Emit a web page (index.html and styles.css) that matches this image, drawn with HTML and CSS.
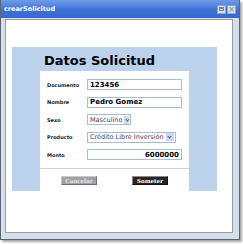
FILE: index.html
```html
<!DOCTYPE html>
<html lang="es">
<head>
    <meta charset="UTF-8">
    <title>crearSolicitud</title>
    <link rel="stylesheet" href="styles.css">
</head>
<body>
    <div class="window">
        <div class="titlebar">
            <span class="title">crearSolicitud</span>
            <div class="win-btns">
                <span class="win-btn"><i class="max"></i></span>
                <span class="win-btn close">&times;</span>
            </div>
        </div>
        <div class="frame">
            <div class="content">
                <div class="panel">
                    <h1>Datos Solicitud</h1>
                    <div class="card">
                        <form class="form">
                            <label>Documento</label>
                            <input type="text" class="field" value="123456">
                            <label>Nombre</label>
                            <input type="text" class="field" value="Pedro Gomez">
                            <label>Sexo</label>
                            <div class="select sexo"><span>Masculino</span><b></b></div>
                            <label>Producto</label>
                            <div class="select producto"><span>Crédito Libre Inversión</span><b></b></div>
                            <label>Monto</label>
                            <input type="text" class="field monto" value="6000000">
                        </form>
                        <div class="actions">
                            <button type="button" class="btn cancel">Cancelar</button>
                            <button type="button" class="btn submit">Someter</button>
                        </div>
                    </div>
                </div>
            </div>
        </div>
    </div>
</body>
</html>
```

FILE: styles.css
```css
* {
    margin: 0;
    padding: 0;
    box-sizing: border-box;
    font-family: "DejaVu Sans", Verdana, sans-serif;
}

body {
    background: #fff;
    width: 243px;
    height: 244px;
}

.window {
    width: 240px;
    height: 240px;
    border: 1px solid #5c6470;
    border-top: none;
    background: #d3e0ec;
    box-shadow: 2px 2px 2px rgba(0, 0, 0, 0.35);
    display: flex;
    flex-direction: column;
}

.titlebar {
    height: 18px;
    background: linear-gradient(180deg, #6f9be6, #3c6fd6 60%, #3a68cc);
    display: flex;
    align-items: center;
    justify-content: space-between;
    padding: 0 3px 0 3px;
}

.title {
    color: #fff;
    font-size: 6.5px;
    font-weight: bold;
}

.win-btns {
    display: flex;
    gap: 1px;
}

.win-btn {
    width: 9px;
    height: 9px;
    border: 1px solid #8ea6cc;
    background: #d8dde6;
    color: #7b8594;
    font-size: 8px;
    line-height: 7px;
    text-align: center;
    display: flex;
    align-items: center;
    justify-content: center;
}

.win-btn .max {
    width: 5px;
    height: 4px;
    border: 1px solid #7b8594;
    border-top-width: 2px;
}

.frame {
    flex: 1;
    padding: 1px 6px 5px 4px;
}

.content {
    height: 214px;
    background: #fff;
    border: 1px solid #9a9a9a;
    padding: 27px 0 0 6px;
}

.panel {
    width: 205px;
    height: 144px;
    background: #bcd2ec;
    padding: 3px 0 0 28px;
}

.panel h1 {
    font-size: 13px;
    line-height: 21px;
    color: #000;
    padding-left: 4px;
}

.card {
    width: 149px;
    height: 120px;
    background: #fff;
}

.form {
    display: grid;
    grid-template-columns: 40px 1fr;
    row-gap: 6.5px;
    align-items: center;
    padding: 8px 7px 0 7px;
}

.form label {
    font-size: 5px;
    font-weight: bold;
    color: #222;
}

.field {
    height: 11px;
    width: 95px;
    border: 1px solid #a9bdd4;
    font-size: 7px;
    font-weight: bold;
    color: #000;
    padding: 0 2px;
    outline: none;
}

.monto {
    text-align: right;
}

.select {
    height: 11px;
    border: 1px solid #a9bdd4;
    display: flex;
    align-items: center;
    font-size: 6.5px;
    color: #4b3a5a;
    padding-left: 2px;
    gap: 2px;
}

.sexo {
    width: 44px;
}

.producto {
    width: 89px;
}

.select span {
    flex: 1;
    white-space: nowrap;
}

.select b {
    width: 8px;
    height: 8px;
    margin-right: 1px;
    background: #c9d8ee;
    position: relative;
}

.select b::after {
    content: "";
    position: absolute;
    left: 2px;
    top: 2px;
    width: 2px;
    height: 2px;
    border-right: 1px solid #3d5fa0;
    border-bottom: 1px solid #3d5fa0;
    transform: rotate(45deg);
}

.actions {
    margin-top: 8px;
    border-top: 1px solid #d4d4d4;
    display: flex;
    padding: 7px 0 0 21px;
    gap: 35px;
}

.btn {
    width: 36px;
    height: 9px;
    border: 1px solid #777;
    font-size: 5.5px;
    font-weight: bold;
    font-family: "DejaVu Serif", serif;
    color: #fff;
    cursor: pointer;
}

.cancel {
    background: #a2a2a2;
    border-color: #c8c8c8 #6e6e6e #6e6e6e #c8c8c8;
    color: #e6e6e6;
}

.submit {
    background: #262626;
    border-color: #888 #111 #111 #888;
}
```
